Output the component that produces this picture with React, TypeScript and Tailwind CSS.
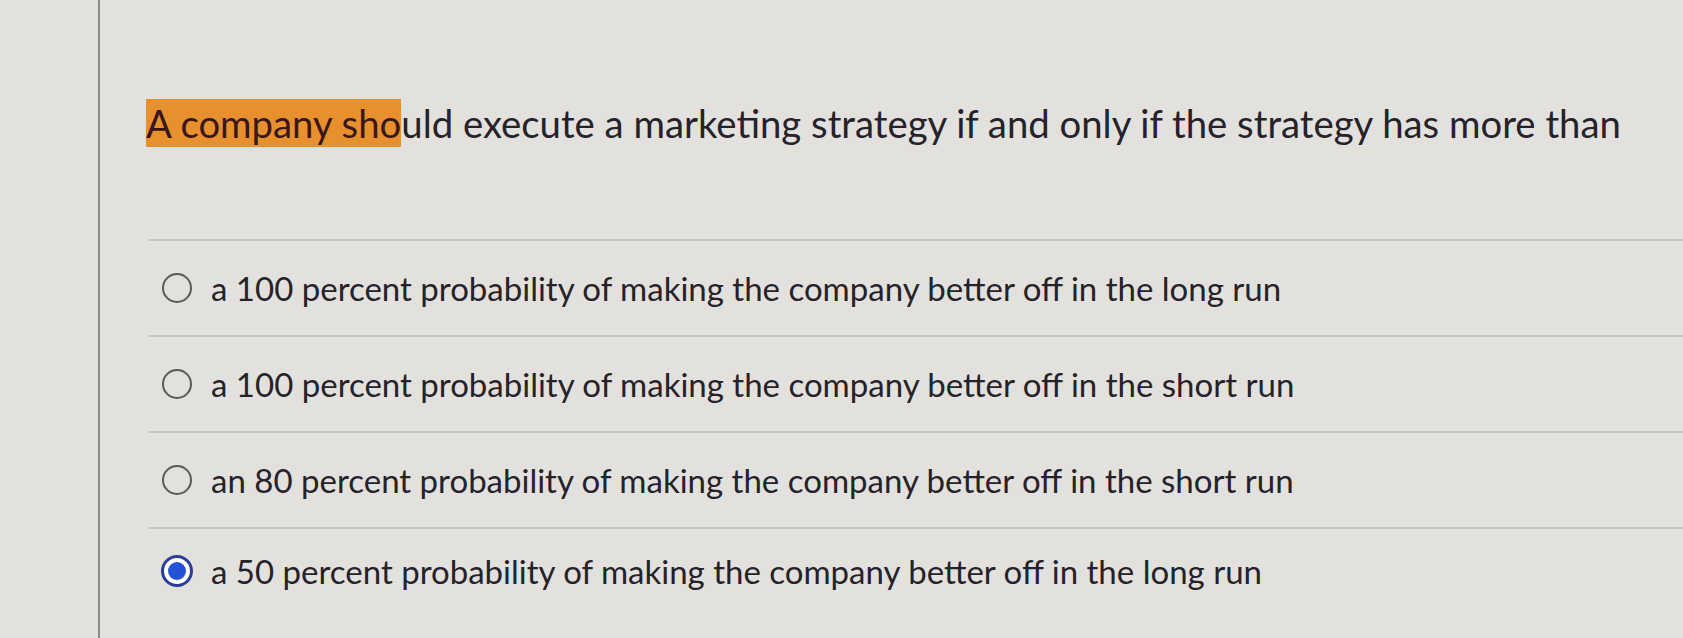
import React from "react";

const options = [
  { id: 1, text: "a 100 percent probability of making the company better off in the long run", checked: false },
  { id: 2, text: "a 100 percent probability of making the company better off in the short run", checked: false },
  { id: 3, text: "an 80 percent probability of making the company better off in the short run", checked: false },
  { id: 4, text: "a 50 percent probability of making the company better off in the long run", checked: true },
];

function Radio({ checked }: { checked: boolean }) {
  if (checked) {
    return (
      <span className="w-[32px] h-[32px] rounded-full border-[3px] border-[#2a3c9c] bg-white flex items-center justify-center shrink-0">
        <span className="w-[18px] h-[18px] rounded-full bg-[#2451d6]" />
      </span>
    );
  }
  return <span className="w-[30px] h-[30px] rounded-full border-[2.5px] border-[#59585b] shrink-0 ml-[1px] mr-[1px]" />;
}

export default function App() {
  return (
    <div
      className="w-[1683px] h-[638px] overflow-hidden bg-[#e2e1dd] flex text-[#26222a]"
      style={{ fontFamily: "Lato, 'Open Sans', sans-serif" }}
    >
      {/* left rule */}
      <div className="w-[100px] shrink-0 border-r-2 border-[#8b8a87]" />

      <div className="flex-1 pl-[46px]">
        {/* QUESTION */}
        <div className="pt-[99px] text-[38.3px] leading-[48px] whitespace-nowrap">
          <span className="inline-block bg-[#e8902e] text-[#3a1717]">A company sho</span>
          uld execute a marketing strategy if and only if the strategy has more than
        </div>

        {/* OPTIONS */}
        <div className="mt-[92px] ml-[3px]">
          {options.map((o) => (
            <div
              key={o.id}
              className={`border-t-2 border-[#c6c5c1] flex items-center pl-[12px] gap-[18px] ${
                o.id === 4 ? "h-[86px]" : "h-[96px]"
              }`}
            >
              <Radio checked={o.checked} />
              <span className="text-[33px] leading-none whitespace-nowrap">{o.text}</span>
            </div>
          ))}
        </div>
      </div>
    </div>
  );
}
